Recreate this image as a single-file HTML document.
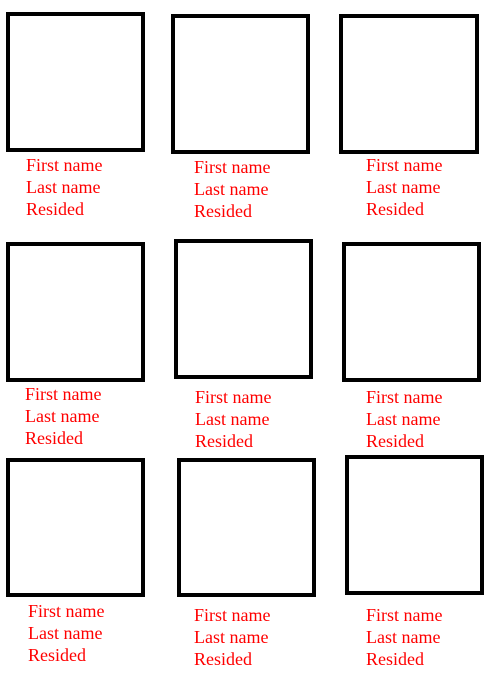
<!DOCTYPE html>
<html><head><style>
body{margin:0;width:500px;height:699px;background:#fff;position:relative;overflow:hidden}
.b{position:absolute;width:131px;height:132px;border:4px solid #000;box-sizing:content-box}
.t{position:absolute;font-family:"Liberation Serif",serif;font-size:18px;line-height:22px;color:#f00;white-space:nowrap}
</style></head><body>
<div class="b" style="left:6px;top:12px"></div>
<div class="b" style="left:171px;top:14px"></div>
<div class="b" style="left:339px;top:14px;width:132px"></div>
<div class="t" style="left:26px;top:154px">First name<br>Last name<br>Resided</div>
<div class="t" style="left:194px;top:156px">First name<br>Last name<br>Resided</div>
<div class="t" style="left:366px;top:154px">First name<br>Last name<br>Resided</div>

<div class="b" style="left:6px;top:242px"></div>
<div class="b" style="left:174px;top:239px"></div>
<div class="b" style="left:342px;top:242px"></div>
<div class="t" style="left:25px;top:383px">First name<br>Last name<br>Resided</div>
<div class="t" style="left:195px;top:386px">First name<br>Last name<br>Resided</div>
<div class="t" style="left:366px;top:386px">First name<br>Last name<br>Resided</div>

<div class="b" style="left:6px;top:458px;height:131px"></div>
<div class="b" style="left:177px;top:458px;height:131px"></div>
<div class="b" style="left:345px;top:455px;height:132px"></div>
<div class="t" style="left:28px;top:600px">First name<br>Last name<br>Resided</div>
<div class="t" style="left:194px;top:604px">First name<br>Last name<br>Resided</div>
<div class="t" style="left:366px;top:604px">First name<br>Last name<br>Resided</div>
</body></html>
